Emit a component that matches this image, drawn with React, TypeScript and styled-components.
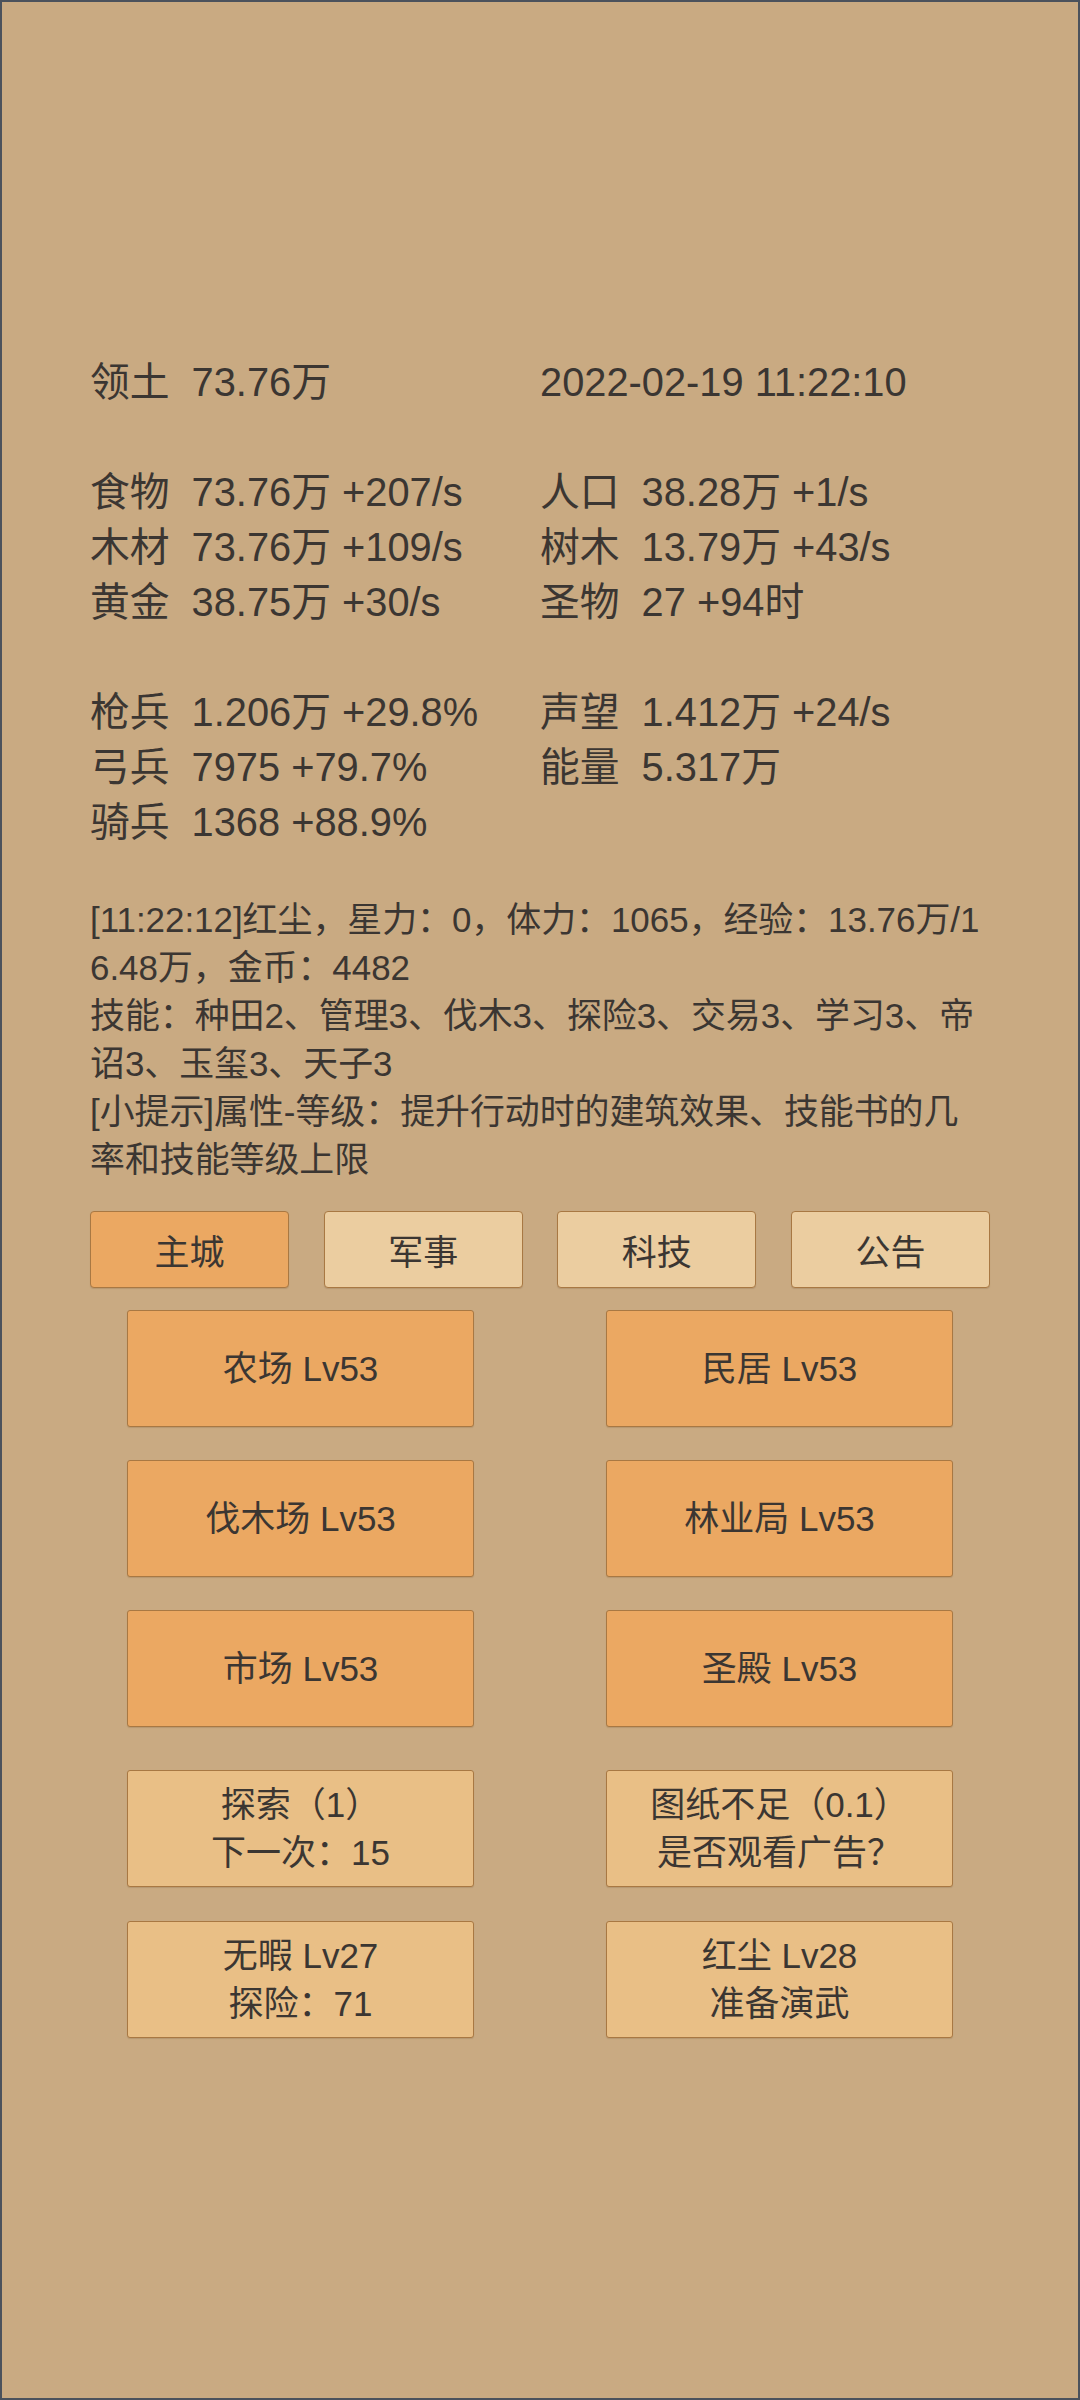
import React from "react";
import styled, { createGlobalStyle } from "styled-components";

const GlobalStyle = createGlobalStyle`
  html, body {
    margin: 0;
    padding: 0;
    background: #c9aa82;
  }
  * { box-sizing: border-box; }
`;

const FONT = `"Liberation Sans", "Noto Sans CJK SC", sans-serif`;

const Page = styled.div`
  width: 1080px;
  height: 2400px;
  border: 2px solid #4b525c;
  background: #c9aa82;
  padding: 353px 88px 0;
  font-family: ${FONT};
  color: #3b3632;
`;

const Stats = styled.div`
  display: grid;
  grid-template-columns: 450px 450px;
  font-size: 39.8px;
  line-height: 55px;
`;

const Cell = styled.div`
  white-space: nowrap;
`;

const Blank = styled.div`
  grid-column: 1 / span 2;
  height: 55px;
`;

const Label = styled.span`
  display: inline-block;
  margin-right: 22px;
`;

const Log = styled.div`
  margin-top: 46px;
  font-size: 34.9px;
  line-height: 48px;
  word-break: break-all;
  width: 900px;
`;

const Tabs = styled.div`
  margin-top: 27px;
  display: flex;
  justify-content: space-between;
`;

const Tab = styled.div<{ $active?: boolean }>`
  width: 199px;
  height: 77px;
  display: flex;
  align-items: center;
  justify-content: center;
  font-size: 35px;
  background: ${(p) => (p.$active ? "#eba862" : "#ebcda0")};
  border: 1px solid #a87843;
  border-radius: 4px;
  box-shadow: 0 1px 1px rgba(80, 50, 20, 0.15);
`;

const Grid = styled.div<{ $top: number; $rowGap: number }>`
  margin-top: ${(p) => p.$top}px;
  display: grid;
  grid-template-columns: 347px 347px;
  column-gap: 132px;
  row-gap: ${(p) => p.$rowGap}px;
  justify-content: center;
`;

const Building = styled.div<{ $light?: boolean }>`
  height: 117px;
  display: flex;
  flex-direction: column;
  align-items: center;
  justify-content: center;
  font-size: 35px;
  line-height: 48px;
  text-align: center;
  background: ${(p) => (p.$light ? "#e9bf86" : "#eba862")};
  border: 1px solid #a87843;
  border-radius: 3px;
  box-shadow: 0 1px 1px rgba(80, 50, 20, 0.15);
`;

const statRows: Array<[string, string] | null> = [
  ["食物|73.76万 +207/s", "人口|38.28万 +1/s"],
  ["木材|73.76万 +109/s", "树木|13.79万 +43/s"],
  ["黄金|38.75万 +30/s", "圣物|27 +94时"],
  null,
  ["枪兵|1.206万 +29.8%", "声望|1.412万 +24/s"],
  ["弓兵|7975 +79.7%", "能量|5.317万"],
  ["骑兵|1368 +88.9%", ""],
];

const Stat = ({ text }: { text: string }) => {
  if (!text) return <Cell />;
  const [label, value] = text.split("|");
  return (
    <Cell>
      <Label>{label}</Label>
      {value}
    </Cell>
  );
};

const buildings = [
  "农场 Lv53",
  "民居 Lv53",
  "伐木场 Lv53",
  "林业局 Lv53",
  "市场 Lv53",
  "圣殿 Lv53",
];

const actions: Array<[string, string]> = [
  ["探索（1）", "下一次：15"],
  ["图纸不足（0.1）", "是否观看广告？"],
  ["无暇 Lv27", "探险：71"],
  ["红尘 Lv28", "准备演武"],
];

export default function App() {
  return (
    <>
      <GlobalStyle />
      <Page>
        <Stats>
          <Stat text="领土|73.76万" />
          <Cell>2022-02-19 11:22:10</Cell>
          <Blank />
          {statRows.map((row, i) =>
            row ? (
              <React.Fragment key={i}>
                <Stat text={row[0]} />
                <Stat text={row[1]} />
              </React.Fragment>
            ) : (
              <Blank key={i} />
            )
          )}
        </Stats>
        <Log>
          <div>[11:22:12]红尘，星力：0，体力：1065，经验：13.76万/16.48万，金币：4482</div>
          <div>技能：种田2、管理3、伐木3、探险3、交易3、学习3、帝诏3、玉玺3、天子3</div>
          <div>[小提示]属性-等级：提升行动时的建筑效果、技能书的几率和技能等级上限</div>
        </Log>
        <Tabs>
          <Tab $active>主城</Tab>
          <Tab>军事</Tab>
          <Tab>科技</Tab>
          <Tab>公告</Tab>
        </Tabs>
        <Grid $top={22} $rowGap={33}>
          {buildings.map((b) => (
            <Building key={b}>{b}</Building>
          ))}
        </Grid>
        <Grid $top={43} $rowGap={34}>
          {actions.map(([a, b]) => (
            <Building key={a} $light>
              <div>{a}</div>
              <div>{b}</div>
            </Building>
          ))}
        </Grid>
      </Page>
    </>
  );
}
